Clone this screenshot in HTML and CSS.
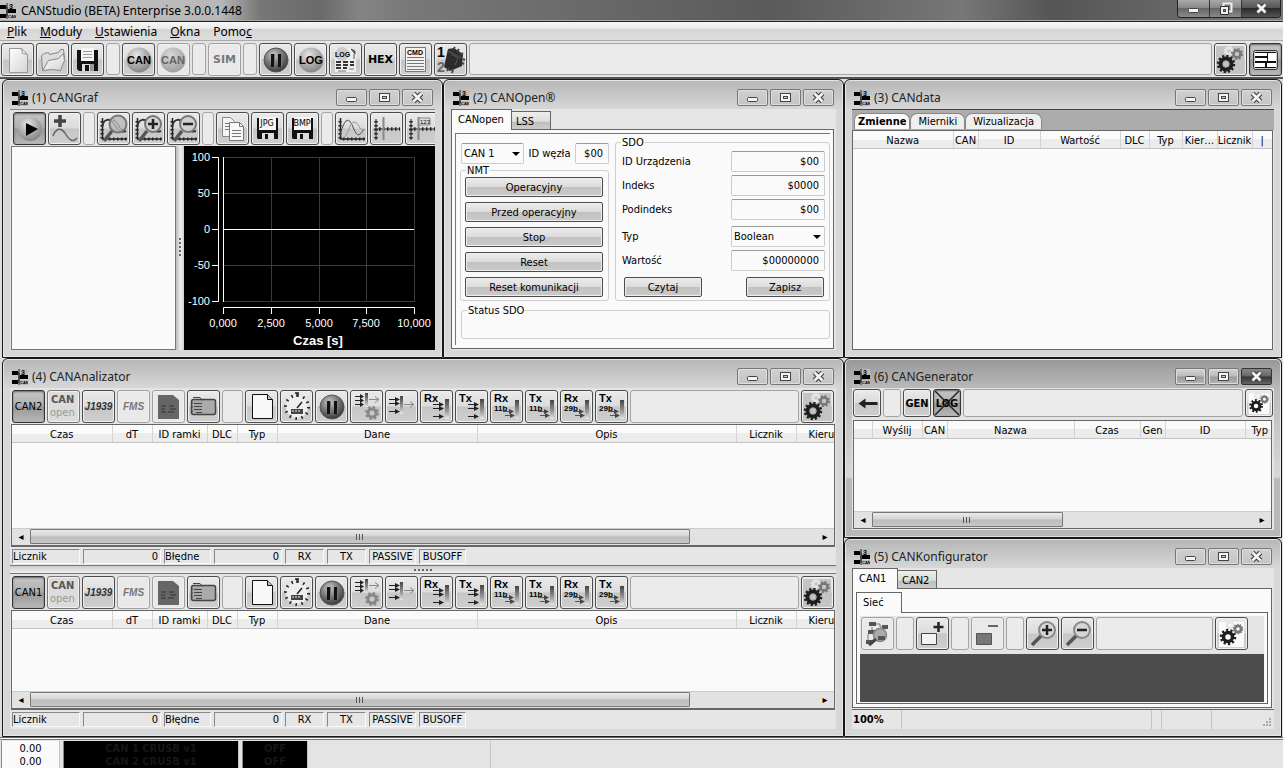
FILE: index.html
```html
<!DOCTYPE html>
<html lang="pl">
<head>
<meta charset="utf-8">
<title>CANStudio (BETA) Enterprise 3.0.0.1448</title>
<link rel="stylesheet" href="styles.css">
</head>
<body>
<svg class="defs" aria-hidden="true">
  <defs>
    <radialGradient id="ball" cx=".4" cy=".3" r=".75"><stop offset="0" stop-color="#e6e6e6"/><stop offset=".5" stop-color="#b0b0b0"/><stop offset="1" stop-color="#808080"/></radialGradient>
    <radialGradient id="ballPale" cx=".4" cy=".3" r=".75"><stop offset="0" stop-color="#d8d8d8"/><stop offset="1" stop-color="#9c9c9c"/></radialGradient>
    <radialGradient id="ballDark" cx=".4" cy=".3" r=".75"><stop offset="0" stop-color="#c8c8c8"/><stop offset=".5" stop-color="#777"/><stop offset="1" stop-color="#333"/></radialGradient>
    <linearGradient id="paper" x1="0" y1="0" x2="1" y2="1"><stop offset="0" stop-color="#fff"/><stop offset="1" stop-color="#d4d4d4"/></linearGradient>
    <linearGradient id="bar" x1="0" y1="0" x2="0" y2="1"><stop offset="0" stop-color="#444"/><stop offset=".6" stop-color="#999"/><stop offset="1" stop-color="#e8e8e8"/></linearGradient>
  </defs>
  <symbol id="i-logo" viewBox="0 0 16 16">
    <path d="M7 0h9v6H7zM7 11h9v5H7z" fill="#bbb"/>
    <path d="M5 4h2v9H5M7 8h2" fill="none" stroke="#222"/>
    <path d="M0 2h6v4H0zM0 11h6v4H0zM8 6h8v4H8z" fill="#000"/>
    <path d="M7 0v16" stroke="#222"/>
  </symbol>
  <symbol id="i-min" viewBox="0 0 31 17"><rect x="10.500" y="8.500" width="10" height="4" rx="1" fill="#f4f4f4" stroke="#444"/></symbol>
  <symbol id="i-max" viewBox="0 0 31 17"><rect x="10.500" y="4.500" width="10" height="8" fill="#f4f4f4" stroke="#444"/><rect x="13.500" y="7.500" width="4" height="2" fill="#ccc" stroke="#444"/></symbol>
  <symbol id="i-restore" viewBox="0 0 27 17"><path d="M11.500 3.500h8v8h-8z" fill="#777" stroke="#eee" stroke-width="2"/><path d="M8.500 6.500h8v8h-8z" fill="#eee" stroke="#333"/><path d="M11.500 9.500h2v2h-2z" fill="#999" stroke="#333"/></symbol>
  <symbol id="i-close" viewBox="0 0 31 17"><path d="M11.500 4.500l8 8m0-8l-8 8" stroke="#444" stroke-width="5"/><path d="M11.500 4.500l8 8m0-8l-8 8" stroke="#f4f4f4" stroke-width="2.600"/></symbol>
  <symbol id="i-new" viewBox="0 0 31 31"><path d="M7.500 4.500h12l6 6v18h-18z" fill="url(#paper)" stroke="#999"/><path d="M19.500 4.500l1 5 5 1z" fill="#eee" stroke="#999"/></symbol>
  <symbol id="i-folder" viewBox="0 0 31 31"><path d="M5.500 26.500l-1-15 3-2 4-1 1 2 9-2 2-3h3l1 9" fill="#ddd" stroke="#888"/><path d="M5.500 26.500l6-10 10-2 5-5 1 7-4 10-8-1z" fill="url(#paper)" stroke="#888"/></symbol>
  <symbol id="i-save" viewBox="0 0 31 31"><path d="M5 6h21v21H7l-2-2z" fill="#111"/><path d="M9 4h13v13H9z" fill="#f6f6f6"/><path d="M11 7.500h9M11 10.500h9M11 13.500h9" stroke="#999"/><path d="M10 20h12v7H10z" fill="#ddd"/><path d="M13 21h4v6h-4z" fill="#111"/><path d="M18 20h4v7h-4z" fill="#999"/></symbol>
  <symbol id="i-ball" viewBox="0 0 31 31"><circle cx="16" cy="16" r="12.500" fill="url(#ball)"/></symbol>
  <symbol id="i-balloff" viewBox="0 0 31 31"><circle cx="15" cy="16" r="12.500" fill="url(#ballPale)"/></symbol>
  <symbol id="i-pause" viewBox="0 0 31 31"><circle cx="16" cy="16" r="12" fill="url(#ballDark)" stroke="#555"/><path d="M11 10h4v13h-4zM18 10h4v13h-4z" fill="#111"/><path d="M14.500 10v13M21.500 10v13" stroke="#777"/></symbol>
  <symbol id="i-logfile" viewBox="0 0 31 31"><path d="M5 4h17l4 4v20H5z" fill="#eee"/><path d="M21 5l4 5V7zM24 10v5" fill="#555" stroke="#555"/><circle cx="12" cy="10" r="7" fill="#ccc"/><path d="M6 18h5M13 18h5M20 18h4M6 21h5M13 21h5M20 21h4M6 24h5M13 24h4" stroke="#333" stroke-width="2"/><path d="M8 27h8M19 25h5" stroke="#777"/></symbol>
  <symbol id="i-cmd" viewBox="0 0 31 31"><path d="M5.500 3.500h20v24h-20z" fill="#f2f2f2" stroke="#777"/><path d="M7 13.500h17M7 16.500h17M7 19.500h17M7 22.500h17M7 25.500h17" stroke="#777"/></symbol>
  <symbol id="i-chip" viewBox="0 0 31 31"><path d="M13 5l-4 18 6 4 12-5 1-12-9-6z" fill="#2b2b2b"/><path d="M13 7l13 7M20 3l-2 3M24 5l-2 3M28 9l-3 2M12 27l2-3M17 29l1-3M28 15l2 1M27 19l2 1" stroke="#444" stroke-width="2"/><path d="M16 10l7 4-3 7" fill="none" stroke="#555"/></symbol>
  <symbol id="i-gear" viewBox="0 0 31 31"><path d="M1 2h28v28H1z" fill="#c4c4c4"/><g fill="none"><circle cx="14" cy="7" r="3" stroke="#e6e6e6" stroke-width="2.500"/><circle cx="14" cy="7" r="4.500" stroke="#e6e6e6" stroke-width="1.500" stroke-dasharray="1.600 1.200"/><circle cx="22" cy="10" r="3.500" stroke="#777" stroke-width="2.500"/><circle cx="22" cy="10" r="5" stroke="#777" stroke-width="2" stroke-dasharray="2 1.900"/><circle cx="11" cy="20" r="5.500" stroke="#1e1e1e" stroke-width="4"/><circle cx="11" cy="20" r="8" stroke="#1e1e1e" stroke-width="2.500" stroke-dasharray="2.200 2"/><circle cx="11" cy="20" r="3" stroke="#aaa"/></g></symbol>
  <symbol id="i-gearpale" viewBox="0 0 31 31"><path d="M3 4h25v25H3z" fill="#fafafa"/><g fill="none"><circle cx="14" cy="7" r="3" stroke="#e6e6e6" stroke-width="3"/><circle cx="22" cy="11" r="3" stroke="#777" stroke-width="2.500"/><circle cx="22" cy="11" r="4.500" stroke="#777" stroke-width="1.500" stroke-dasharray="1.600 1.200"/><circle cx="12" cy="19" r="4.500" stroke="#1e1e1e" stroke-width="3.500"/><circle cx="12" cy="19" r="7" stroke="#1e1e1e" stroke-width="2.500" stroke-dasharray="2.200 2.200"/></g></symbol>
  <symbol id="i-layout" viewBox="0 0 31 31"><rect x="3.500" y="6.500" width="24" height="19" rx="2" fill="#ccc" stroke="#333"/><path d="M5 8h21v16H5z" fill="#111"/><path d="M5 9h12v3H5zM5 14h12v3H5zM5 19h10v4H5zM18 9h8v8h-8zM17 19h9v4h-9z" fill="#fff"/></symbol>
  <symbol id="i-play" viewBox="0 0 31 31"><circle cx="16" cy="16" r="12" fill="url(#ball)"/><path d="M12 10l12 6-12 7z" fill="#000"/></symbol>
  <symbol id="i-addcurve" viewBox="0 0 31 31"><path d="M11 2v12M5 8h12" stroke="#444" stroke-width="3.500"/><path d="M4 23c3-8 8-9 12-3 4 7 8 10 12 5" fill="none" stroke="#666" stroke-width="1.500"/></symbol>
  <symbol id="i-axes" viewBox="0 0 31 31"><path d="M4.500 5v21H29" fill="none" stroke="#222" stroke-width="1.500"/><path d="M4 8v18M7 26h22" fill="none" stroke="#222" stroke-width="3" stroke-dasharray="1.500 2.500"/></symbol>
  <symbol id="i-lens" viewBox="0 0 31 31"><use href="#i-axes"/><path d="M4 14c2-9 8-9 12-3s6 9 12 7" fill="none" stroke="#333" stroke-width="2"/><path d="M6 28l8-10" stroke="#555" stroke-width="3.500"/></symbol>
  <symbol id="i-zoomfit" viewBox="0 0 31 31"><use href="#i-lens"/><circle cx="20" cy="11" r="8.500" fill="#bbb" fill-opacity=".85" stroke="#777" stroke-width="2"/><path d="M15 7c5 1 5 7 9 10" fill="none" stroke="#888"/></symbol>
  <symbol id="i-zoomin" viewBox="0 0 31 31"><use href="#i-lens"/><circle cx="20" cy="11" r="8" fill="#d0d0d0" stroke="#777" stroke-width="2"/><path d="M20 6v10M15 11h10" stroke="#222" stroke-width="2.500"/></symbol>
  <symbol id="i-zoomout" viewBox="0 0 31 31"><use href="#i-lens"/><circle cx="20" cy="11" r="8" fill="#d0d0d0" stroke="#777" stroke-width="2"/><path d="M15 11h10" stroke="#222" stroke-width="2.500"/></symbol>
  <symbol id="i-copy" viewBox="0 0 31 31"><path d="M5.500 4.500h8l4 4v15h-12z" fill="#f4f4f4" stroke="#888"/><path d="M12.500 9.500h10l4 4v14h-14z" fill="#f8f8f8" stroke="#777"/><path d="M22.500 9.500v4h4M15 17.500h9M15 20.500h9M15 23.500h9M8 10.500h4M8 13.500h4M8 16.500h4" fill="none" stroke="#777"/></symbol>
  <symbol id="i-disk" viewBox="0 0 31 31"><path d="M5 5h21v21H6l-1-1z" fill="#111"/><path d="M7 4h17v13H7z" fill="#f6f6f6"/><path d="M10 20h12v6H10z" fill="#ddd"/><path d="M13 21h3v5h-3z" fill="#111"/></symbol>
  <symbol id="i-waves" viewBox="0 0 31 31"><use href="#i-axes"/><path d="M4 22c5-18 9-18 13-8s6 10 11 2" fill="none" stroke="#444"/><path d="M6 25c7-1 7-16 12-16s5 9 10 8" fill="none" stroke="#999"/></symbol>
  <symbol id="i-cursor" viewBox="0 0 31 31"><path d="M5 6v21M3 16h26" stroke="#222"/><path d="M5 8v19M8 16h21" stroke="#222" stroke-width="3.500" stroke-dasharray="1.500 2.500"/><path d="M12.500 4v23" stroke="#888" stroke-width="2"/></symbol>
  <symbol id="i-cursorval" viewBox="0 0 31 31"><use href="#i-cursor"/><path d="M13 5h11v7H13z" fill="#ddd" stroke="#888"/></symbol>
  <symbol id="i-filedark" viewBox="0 0 31 31"><path d="M5 4h15l6 5v19H5z" fill="#666"/><path d="M8 15h5M16 15h5M8 18h4M17 18h6M8 21h5M15 21h6" stroke="#444" stroke-width="1.500"/></symbol>
  <symbol id="i-table" viewBox="0 0 31 31"><rect x="3.500" y="8.500" width="24" height="15" rx="2" fill="#aaa" stroke="#444" stroke-width="1.500"/><path d="M5 6.500h7l2 3M6 12.500h8M6 15.500h8M6 18.500h8M8 21.500h6M4 12h1M4 16h1M4 20h1" fill="none" stroke="#444"/></symbol>
  <symbol id="i-page" viewBox="0 0 31 31"><path d="M6.500 3.500h15l5 5v19h-20z" fill="#f8f8f8" stroke="#111"/><path d="M21.500 3.500v5h5" fill="#bbb" stroke="#111"/></symbol>
  <symbol id="i-clock" viewBox="0 0 31 31"><circle cx="16" cy="16" r="11" fill="#eee"/><circle cx="16" cy="16" r="11.500" fill="none" stroke="#222" stroke-width="3" stroke-dasharray="1.500 4.520"/><path d="M14 2h4M16 2v4M16 17l5-6" stroke="#222" stroke-width="1.500"/><path d="M10 18h12v5H10z" fill="#444"/><path d="M11 20h2m1 0h2m1 0h2" stroke="#eee"/></symbol>
  <symbol id="i-arrows" viewBox="0 0 31 31"><path d="M4 7.500h6M4 11.500h6M4 15.500h6" stroke="#222"/><path d="M9 5l4 2.500-4 2.500zM9 9l4 2.500-4 2.500zM9 13l4 2.500-4 2.500z" fill="#222"/></symbol>
  <symbol id="i-filter" viewBox="0 0 31 31"><use href="#i-arrows" y="-2"/><path d="M14 2h3v14h-3z" fill="url(#bar)"/><path d="M18 8.500h9m-3-3l4 3-4 3" fill="none" stroke="#888"/><circle cx="21" cy="22" r="4" fill="none" stroke="#888" stroke-width="3"/><circle cx="21" cy="22" r="6" fill="none" stroke="#888" stroke-width="2" stroke-dasharray="2.500 2.200"/></symbol>
  <symbol id="i-filter2" viewBox="0 0 31 31"><path d="M3 8.500h7M3 12.500h7M3 20.500h7" stroke="#222"/><path d="M9 6l5 2.500-5 2.500zM9 10l5 2.500-5 2.500zM9 18l5 2.500-5 2.500z" fill="#222"/><path d="M14 5h3v18h-3z" fill="url(#bar)"/><path d="M18 13.500h9m-3-3l4 3-4 3" fill="none" stroke="#888"/></symbol>
  <symbol id="i-flow" viewBox="0 0 31 31"><path d="M12 13.500h8M12 17.500h8M12 25.500h8" stroke="#222"/><path d="M18 11l5 2.500-5 2.500zM18 15l5 2.500-5 2.500zM18 23l5 2.500-5 2.500z" fill="#222"/><path d="M24 8h4v20h-4z" fill="url(#bar)"/></symbol>
  <symbol id="i-flow2" viewBox="0 0 31 31"><path d="M12 20.500h7M14 24.500h7" stroke="#555"/><path d="M18 18l5 2.500-5 2.500zM19 22l5 2.500-5 2.500z" fill="#444"/><path d="M24 9h4v19h-4z" fill="url(#bar)"/></symbol>
  <symbol id="i-back" viewBox="0 0 25 26"><path d="M4 13.500l7-5v3.500h12v3H11v3.500z" fill="#222"/></symbol>
  <symbol id="i-cross" viewBox="0 0 26 26"><path d="M1 1l24 24M25 1L1 25" stroke="#222" stroke-width="1.500"/></symbol>
  <symbol id="i-net" viewBox="0 0 31 31"><path d="M7 4h7v4H7zM20 7h6v4h-6zM6 12h7v4H6zM4 22h7v4H4z" fill="#555"/><path d="M14 6h4v3h2M10 12v-3M6 16v6" fill="none" stroke="#777"/><circle cx="18" cy="17" r="6.500" fill="#aaa" stroke="#888" stroke-width="1.500"/><path d="M16 18h7v4h-7z" fill="#555"/><path d="M7 27l7-6" stroke="#444" stroke-width="3"/></symbol>
  <symbol id="i-nodeadd" viewBox="0 0 31 31"><path d="M4.500 15.500h15v11h-15z" fill="#f2f2f2" stroke="#444"/><path d="M21.500 4v10M16.500 9h10" stroke="#222" stroke-width="2.500"/></symbol>
  <symbol id="i-nodedel" viewBox="0 0 31 31"><path d="M4.500 15.500h15v11h-15z" fill="#777" stroke="#555"/><path d="M16 8h10" stroke="#666" stroke-width="2"/></symbol>
  <symbol id="i-magin" viewBox="0 0 31 31"><path d="M5 27L15 17" stroke="#555" stroke-width="3.500"/><circle cx="20" cy="12" r="8" fill="#d6d6d6" stroke="#888" stroke-width="2"/><path d="M20 7v10M15 12h10" stroke="#222" stroke-width="2.500"/></symbol>
  <symbol id="i-magout" viewBox="0 0 31 31"><path d="M5 27L15 17" stroke="#555" stroke-width="3.500"/><circle cx="20" cy="12" r="8" fill="#d6d6d6" stroke="#888" stroke-width="2"/><path d="M15 12h10" stroke="#222" stroke-width="2.500"/></symbol>
</svg>

<div class="app">
  <header class="apptitle">
    <svg class="logo"><use href="#i-logo"/><text x="9" y="6" class="t-logo3">3</text><text x="8" y="15" class="t-logoc">CAN</text></svg>
    <h1>CANStudio (BETA) Enterprise 3.0.0.1448</h1>
    <div class="appctl">
      <button aria-label="Minimalizuj"><svg><use href="#i-min"/></svg></button>
      <button aria-label="Przywróć"><svg><use href="#i-restore"/></svg></button>
      <button class="x" aria-label="Zamknij"><svg><use href="#i-close"/></svg></button>
    </div>
  </header>
  <nav class="menu">
    <a href="#"><u>P</u>lik</a><a href="#"><u>M</u>oduły</a><a href="#"><u>U</u>stawienia</a><a href="#"><u>O</u>kna</a><a href="#">Pomo<u>c</u></a>
  </nav>
  <div class="toolbar main">
    <button class="tb" aria-label="Nowy"><svg><use href="#i-new"/></svg></button>
    <button class="tb" aria-label="Otwórz"><svg><use href="#i-folder"/></svg></button>
    <button class="tb" aria-label="Zapisz projekt"><svg><use href="#i-save"/></svg></button>
    <span class="sep"></span>
    <button class="tb" aria-label="CAN start"><svg><use href="#i-ball"/><text x="16" y="20" class="t-ball">CAN</text></svg></button>
    <button class="tb off" aria-label="CAN stop"><svg><use href="#i-balloff"/><text x="15" y="20" class="t-ball pale">CAN</text></svg></button>
    <span class="sep"></span>
    <button class="tb off sim">SIM</button>
    <span class="sep"></span>
    <button class="tb" aria-label="Pauza"><svg><use href="#i-pause"/></svg></button>
    <button class="tb" aria-label="Log"><svg><use href="#i-ball"/><text x="16" y="20" class="t-ball">LOG</text></svg></button>
    <button class="tb" aria-label="Plik logu"><svg><use href="#i-logfile"/><text x="5" y="13" class="t-7">LOG</text></svg></button>
    <button class="tb hex">HEX</button>
    <button class="tb" aria-label="Polecenia"><svg><use href="#i-cmd"/><text x="15" y="11" class="t-7 mid">CMD</text></svg></button>
    <button class="tb" aria-label="Urządzenia"><svg><use href="#i-chip"/><text x="2" y="13" class="t-14">1</text><text x="2" y="28" class="t-14 grey">2</text></svg></button>
    <span class="sep fill"></span>
    <button class="tb" aria-label="Opcje"><svg><use href="#i-gear"/></svg></button>
    <button class="tb down" aria-label="Układ okien"><svg><use href="#i-layout"/></svg></button>
  </div>

  <main class="desktop">
    <div class="col left">
      <div class="pair">
        <section class="win">
          <header class="wt"><svg class="logo"><use href="#i-logo"/><text x="9" y="6" class="t-logo3">3</text><text x="8" y="15" class="t-logoc">CAN</text></svg><h2>(1) CANGraf</h2>
            <button aria-label="Minimalizuj"><svg><use href="#i-min"/></svg></button><button aria-label="Maksymalizuj"><svg><use href="#i-max"/></svg></button><button aria-label="Zamknij"><svg><use href="#i-close"/></svg></button></header>
          <div class="wc">
            <div class="toolbar graf">
              <button class="tb down" aria-label="Start"><svg><use href="#i-play"/></svg></button>
              <button class="tb" aria-label="Dodaj przebieg"><svg><use href="#i-addcurve"/></svg></button>
              <span class="sep thin"></span>
              <button class="tb" aria-label="Dopasuj"><svg><use href="#i-zoomfit"/></svg></button>
              <button class="tb" aria-label="Powiększ"><svg><use href="#i-zoomin"/></svg></button>
              <button class="tb" aria-label="Pomniejsz"><svg><use href="#i-zoomout"/></svg></button>
              <span class="sep thin"></span>
              <button class="tb" aria-label="Kopiuj"><svg><use href="#i-copy"/></svg></button>
              <button class="tb" aria-label="Zapisz JPG"><svg><use href="#i-disk"/><text x="15" y="13" class="t-8 mid">JPG</text></svg></button>
              <button class="tb" aria-label="Zapisz BMP"><svg><use href="#i-disk"/><text x="15" y="13" class="t-8 mid">BMP</text></svg></button>
              <span class="sep thin"></span>
              <button class="tb" aria-label="Przebiegi"><svg><use href="#i-waves"/></svg></button>
              <button class="tb" aria-label="Kursor"><svg><use href="#i-cursor"/></svg></button>
              <button class="tb" aria-label="Wartości kursora"><svg><use href="#i-cursorval"/><text x="14" y="11" class="t-6">123</text></svg></button>
            </div>
            <div class="grafbody">
              <div class="serieslist"></div>
              <div class="vsplit"><i></i></div>
              <div class="plot">
                <svg viewBox="0 0 251 204" role="img" aria-label="Wykres">
                  <path d="M39 11.500h191M39 47.500h191M39 119.500h191M39 155.500h191M87.500 11v145M135.500 11v145M182.500 11v145M230.500 11v145" stroke="#3a3a3a"/>
                  <path d="M39.500 11v145M28 11.500h6.500v144H28M28 47.500h6M28 83.500h6M28 119.500h6M39 83.500h191M39.500 168v-6.500h191v6.500M87.500 162v6M135.500 162v6M182.500 162v6" fill="none" stroke="#fff"/>
                  <g class="ax end"><text x="26" y="15">100</text><text x="26" y="51">50</text><text x="26" y="87">0</text><text x="26" y="123">-50</text><text x="26" y="159">-100</text></g>
                  <g class="ax mid"><text x="39" y="181">0,000</text><text x="87" y="181">2,500</text><text x="135" y="181">5,000</text><text x="182" y="181">7,500</text><text x="230" y="181">10,000</text></g>
                  <text x="134" y="199" class="axt">Czas [s]</text>
                </svg>
              </div>
            </div>
          </div>
        </section>

        <section class="win">
          <header class="wt"><svg class="logo"><use href="#i-logo"/><text x="9" y="6" class="t-logo3">3</text><text x="8" y="15" class="t-logoc">CAN</text></svg><h2>(2) CANOpen®</h2>
            <button aria-label="Minimalizuj"><svg><use href="#i-min"/></svg></button><button aria-label="Maksymalizuj"><svg><use href="#i-max"/></svg></button><button aria-label="Zamknij"><svg><use href="#i-close"/></svg></button></header>
          <div class="wc">
            <div class="tabs"><button class="tab on t60">CANopen</button><button class="tab">LSS</button></div>
            <div class="panel">
              <div class="openform">
                <div class="nodecol">
                  <div class="noderow">
                    <span class="sel"><select aria-label="Kanał"><option>CAN 1</option></select></span>
                    <label for="node">ID węzła</label><input id="node" class="fld" value="$00">
                  </div>
                  <fieldset class="nmt"><legend>NMT</legend>
                    <button class="btn">Operacyjny</button><button class="btn">Przed operacyjny</button><button class="btn">Stop</button><button class="btn">Reset</button><button class="btn">Reset komunikacji</button>
                  </fieldset>
                </div>
                <fieldset class="sdo"><legend>SDO</legend>
                  <div class="rows">
                    <label for="dev">ID Urządzenia</label><input id="dev" class="fld" value="$00">
                    <label for="idx">Indeks</label><input id="idx" class="fld" value="$0000">
                    <label for="sub">Podindeks</label><input id="sub" class="fld" value="$00">
                  </div>
                  <div class="rows">
                    <label for="typ">Typ</label><span class="sel"><select id="typ"><option>Boolean</option></select></span>
                    <label for="val">Wartość</label><input id="val" class="fld" value="$00000000">
                  </div>
                  <div class="rw"><button class="btn">Czytaj</button><button class="btn">Zapisz</button></div>
                </fieldset>
                <fieldset class="status"><legend>Status SDO</legend></fieldset>
              </div>
            </div>
          </div>
        </section>
      </div>

      <section class="win">
        <header class="wt"><svg class="logo"><use href="#i-logo"/><text x="9" y="6" class="t-logo3">3</text><text x="8" y="15" class="t-logoc">CAN</text></svg><h2>(4) CANAnalizator</h2>
          <button aria-label="Minimalizuj"><svg><use href="#i-min"/></svg></button><button aria-label="Maksymalizuj"><svg><use href="#i-max"/></svg></button><button aria-label="Zamknij"><svg><use href="#i-close"/></svg></button></header>
        <div class="wc">
          <div class="an an1">
            <div class="toolbar ana">
              <button class="tb down">CAN2</button>
              <button class="tb soft" aria-label="CANopen"><svg><text x="3" y="12" class="t-open">CAN</text><text x="2" y="25" class="t-open2">open</text></svg></button>
              <button class="tb ital">J1939</button>
              <button class="tb off ital">FMS</button>
              <button class="tb off" aria-label="Plik"><svg><use href="#i-filedark"/></svg></button>
              <button class="tb" aria-label="Tabela"><svg><use href="#i-table"/></svg></button>
              <span class="sep wide"></span>
              <button class="tb" aria-label="Wyczyść"><svg><use href="#i-page"/></svg></button>
              <button class="tb" aria-label="Czas"><svg><use href="#i-clock"/></svg></button>
              <button class="tb" aria-label="Pauza"><svg><use href="#i-pause"/></svg></button>
              <button class="tb" aria-label="Ustawienia filtru"><svg><use href="#i-filter"/></svg></button>
              <button class="tb" aria-label="Filtr"><svg><use href="#i-filter2"/></svg></button>
              <button class="tb" aria-label="Rx"><svg><use href="#i-flow"/><text x="3" y="11" class="t-rx">Rx</text></svg></button>
              <button class="tb" aria-label="Tx"><svg><use href="#i-flow"/><text x="3" y="11" class="t-rx">Tx</text></svg></button>
              <button class="tb" aria-label="Rx 11b"><svg><use href="#i-flow2"/><text x="3" y="11" class="t-rx">Rx</text><text x="3" y="20" class="t-bit">11b</text></svg></button>
              <button class="tb" aria-label="Tx 11b"><svg><use href="#i-flow2"/><text x="3" y="11" class="t-rx">Tx</text><text x="3" y="20" class="t-bit">11b</text></svg></button>
              <button class="tb" aria-label="Rx 29b"><svg><use href="#i-flow2"/><text x="3" y="11" class="t-rx">Rx</text><text x="3" y="20" class="t-bit">29b</text></svg></button>
              <button class="tb" aria-label="Tx 29b"><svg><use href="#i-flow2"/><text x="3" y="11" class="t-rx">Tx</text><text x="3" y="20" class="t-bit">29b</text></svg></button>
              <span class="sep fill"></span>
              <button class="tb" aria-label="Opcje"><svg><use href="#i-gear"/></svg></button>
            </div>
            <div class="grid">
              <table><colgroup><col class="w100"><col class="w40"><col class="w55"><col class="w30"><col class="w40"><col class="w200"><col><col class="w60"><col class="w38"></colgroup>
                <thead><tr><th>Czas</th><th>dT</th><th>ID ramki</th><th>DLC</th><th>Typ</th><th>Dane</th><th>Opis</th><th>Licznik</th><th class="cut">Kieru</th></tr></thead></table>
              <div class="rest"></div>
              <div class="hscroll"><button aria-label="W lewo">◂</button><div class="track"><div class="thumb"></div></div><button aria-label="W prawo">▸</button></div>
            </div>
            <div class="cells"><span class="c68 l">Licznik</span><span class="c78 r">0</span><span class="c48 l">Błędne</span><span class="c68 r">0</span><span class="c40">RX</span><span class="c40">TX</span><span class="c48">PASSIVE</span><span class="c48">BUSOFF</span></div>
          </div>
          <div class="hsplit"><i></i></div>
          <div class="an an2">
            <div class="toolbar ana">
              <button class="tb down">CAN1</button>
              <button class="tb soft" aria-label="CANopen"><svg><text x="3" y="12" class="t-open">CAN</text><text x="2" y="25" class="t-open2">open</text></svg></button>
              <button class="tb ital">J1939</button>
              <button class="tb off ital">FMS</button>
              <button class="tb off" aria-label="Plik"><svg><use href="#i-filedark"/></svg></button>
              <button class="tb" aria-label="Tabela"><svg><use href="#i-table"/></svg></button>
              <span class="sep wide"></span>
              <button class="tb" aria-label="Wyczyść"><svg><use href="#i-page"/></svg></button>
              <button class="tb" aria-label="Czas"><svg><use href="#i-clock"/></svg></button>
              <button class="tb" aria-label="Pauza"><svg><use href="#i-pause"/></svg></button>
              <button class="tb" aria-label="Ustawienia filtru"><svg><use href="#i-filter"/></svg></button>
              <button class="tb" aria-label="Filtr"><svg><use href="#i-filter2"/></svg></button>
              <button class="tb" aria-label="Rx"><svg><use href="#i-flow"/><text x="3" y="11" class="t-rx">Rx</text></svg></button>
              <button class="tb" aria-label="Tx"><svg><use href="#i-flow"/><text x="3" y="11" class="t-rx">Tx</text></svg></button>
              <button class="tb" aria-label="Rx 11b"><svg><use href="#i-flow2"/><text x="3" y="11" class="t-rx">Rx</text><text x="3" y="20" class="t-bit">11b</text></svg></button>
              <button class="tb" aria-label="Tx 11b"><svg><use href="#i-flow2"/><text x="3" y="11" class="t-rx">Tx</text><text x="3" y="20" class="t-bit">11b</text></svg></button>
              <button class="tb" aria-label="Rx 29b"><svg><use href="#i-flow2"/><text x="3" y="11" class="t-rx">Rx</text><text x="3" y="20" class="t-bit">29b</text></svg></button>
              <button class="tb" aria-label="Tx 29b"><svg><use href="#i-flow2"/><text x="3" y="11" class="t-rx">Tx</text><text x="3" y="20" class="t-bit">29b</text></svg></button>
              <span class="sep fill"></span>
              <button class="tb" aria-label="Opcje"><svg><use href="#i-gear"/></svg></button>
            </div>
            <div class="grid">
              <table><colgroup><col class="w100"><col class="w40"><col class="w55"><col class="w30"><col class="w40"><col class="w200"><col><col class="w60"><col class="w38"></colgroup>
                <thead><tr><th>Czas</th><th>dT</th><th>ID ramki</th><th>DLC</th><th>Typ</th><th>Dane</th><th>Opis</th><th>Licznik</th><th class="cut">Kieru</th></tr></thead></table>
              <div class="rest"></div>
              <div class="hscroll"><button aria-label="W lewo">◂</button><div class="track"><div class="thumb"></div></div><button aria-label="W prawo">▸</button></div>
            </div>
            <div class="cells"><span class="c68 l">Licznik</span><span class="c78 r">0</span><span class="c48 l">Błędne</span><span class="c68 r">0</span><span class="c40">RX</span><span class="c40">TX</span><span class="c48">PASSIVE</span><span class="c48">BUSOFF</span></div>
          </div>
        </div>
      </section>
    </div>

    <div class="col right">
      <section class="win">
        <header class="wt"><svg class="logo"><use href="#i-logo"/><text x="9" y="6" class="t-logo3">3</text><text x="8" y="15" class="t-logoc">CAN</text></svg><h2>(3) CANdata</h2>
          <button aria-label="Minimalizuj"><svg><use href="#i-min"/></svg></button><button aria-label="Maksymalizuj"><svg><use href="#i-max"/></svg></button><button aria-label="Zamknij"><svg><use href="#i-close"/></svg></button></header>
        <div class="wc">
          <div class="rtabs"><button class="on">Zmienne</button><button>Mierniki</button><button>Wizualizacja</button></div>
          <div class="grid data">
            <table><colgroup><col><col class="w25"><col class="w62"><col class="w80"><col class="w29"><col class="w33"><col class="w35"><col class="w35"><col class="w20"></colgroup>
              <thead><tr><th>Nazwa</th><th>CAN</th><th>ID</th><th>Wartość</th><th>DLC</th><th>Typ</th><th>Kier…</th><th>Licznik</th><th>|</th></tr></thead></table>
            <div class="rest"></div>
          </div>
        </div>
      </section>

      <section class="win active">
        <header class="wt"><svg class="logo"><use href="#i-logo"/><text x="9" y="6" class="t-logo3">3</text><text x="8" y="15" class="t-logoc">CAN</text></svg><h2>(6) CANGenerator</h2>
          <button aria-label="Minimalizuj"><svg><use href="#i-min"/></svg></button><button aria-label="Maksymalizuj"><svg><use href="#i-max"/></svg></button><button class="x" aria-label="Zamknij"><svg><use href="#i-close"/></svg></button></header>
        <div class="wc">
          <div class="toolbar gen">
            <button class="tb" aria-label="Wstecz"><svg><use href="#i-back"/></svg></button>
            <span class="sep"></span>
            <button class="tb">GEN</button>
            <button class="tb down nolog">LOG<svg><use href="#i-cross"/></svg></button>
            <span class="sep fill"></span>
            <button class="tb" aria-label="Opcje"><svg><use href="#i-gearpale"/></svg></button>
          </div>
          <div class="grid gengrid">
            <table><colgroup><col class="w18"><col class="w50"><col class="w25"><col><col class="w66"><col class="w25"><col class="w80"><col class="w26"></colgroup>
              <thead><tr><th></th><th>Wyślij</th><th>CAN</th><th>Nazwa</th><th>Czas</th><th>Gen</th><th>ID</th><th class="typ">Typ</th></tr></thead></table>
            <div class="rest"></div>
            <div class="hscroll"><button aria-label="W lewo">◂</button><div class="track"><div class="thumb"></div></div><button aria-label="W prawo">▸</button></div>
          </div>
        </div>
      </section>

      <section class="win">
        <header class="wt"><svg class="logo"><use href="#i-logo"/><text x="9" y="6" class="t-logo3">3</text><text x="8" y="15" class="t-logoc">CAN</text></svg><h2>(5) CANKonfigurator</h2>
          <button aria-label="Minimalizuj"><svg><use href="#i-min"/></svg></button><button aria-label="Maksymalizuj"><svg><use href="#i-max"/></svg></button><button aria-label="Zamknij"><svg><use href="#i-close"/></svg></button></header>
        <div class="wc">
          <div class="tabs"><button class="tab on t45">CAN1</button><button class="tab">CAN2</button></div>
          <div class="panel konf">
            <div class="tabs inner"><button class="tab on t45">Sieć</button></div>
            <div class="panel net">
              <div class="toolbar nett">
                <button class="tb off" aria-label="Szukaj"><svg><use href="#i-net"/></svg></button>
                <span class="sep middle"></span>
                <button class="tb" aria-label="Dodaj węzeł"><svg><use href="#i-nodeadd"/></svg></button>
                <span class="sep middle"></span>
                <button class="tb off" aria-label="Usuń węzeł"><svg><use href="#i-nodedel"/></svg></button>
                <span class="sep middle"></span>
                <button class="tb" aria-label="Powiększ"><svg><use href="#i-magin"/></svg></button>
                <button class="tb" aria-label="Pomniejsz"><svg><use href="#i-magout"/></svg></button>
                <span class="sep fill"></span>
                <button class="tb" aria-label="Opcje"><svg><use href="#i-gearpale"/></svg></button>
              </div>
              <div class="canvas"></div>
            </div>
          </div>
          <div class="kstat"><span class="k1">100%</span><span class="k2"></span><span class="k3"></span><span class="k4"></span><span class="k5"><svg viewBox="0 0 9 9"><path d="M6 1h2M3 4h2M6 4h2M0 7h2M3 7h2M6 7h2" stroke="#aaa" stroke-width="2"/></svg></span></div>
        </div>
      </section>
    </div>
  </main>

  <footer class="statusbar">
    <span class="load">0.00<br>0.00</span>
    <span class="dev">CAN 1 CRUSB v1<br>CAN 2 CRUSB v1</span>
    <span class="state">OFF<br>OFF</span>
    <span class="msg"></span>
  </footer>
</div>
</body>
</html>
```

FILE: styles.css
```css
* { box-sizing: border-box; }
body { margin: 0; background: #e4e4e4; color: #000; font: 11px/13px "DejaVu Sans Condensed", "DejaVu Sans", sans-serif; }
button, input, select { font: inherit; color: inherit; margin: 0; padding: 0; border-radius: 0; }
h1, h2 { margin: 0; font: 12px/16px "Noto Sans", sans-serif; }
.defs { position: absolute; width: 0; height: 0; }
.app { display: flex; flex-direction: column; min-height: 100vh; }
.logo { width: 16px; height: 16px; flex: none; }

/* main window frame */
.apptitle { display: flex; align-items: center; gap: 5px; height: 22px; border-bottom: 1px solid #222; box-shadow: inset 0 -1px #aaa;
  background: linear-gradient(90deg, #c2c2c2 0, #b8b8b8 220px, #777 260px, #6a6a6a 320px, #848484 360px, #787878 410px, #5a5a5a 60%, #777 75%, #555 82%, #777 100%); }
.apptitle h1 { flex: 1; }
.appctl { display: flex; align-self: flex-start; width: 104px; height: 18px; margin-right: 2px; border: 1px solid #222; border-top: 0; border-radius: 0 0 4px 4px; overflow: hidden; }
.appctl button { flex: 27; border: 0; border-right: 1px solid #333; background: linear-gradient(#aaa, #888 45%, #666 50%, #8a8a8a); display: flex; justify-content: center; }
.appctl button.x { flex: 46; border-right: 0; background: linear-gradient(#777, #555 45%, #2a2a2a 50%, #555); }
.appctl svg { width: 31px; height: 17px; }

.menu { display: flex; gap: 13px; align-items: center; height: 19px; padding: 1px 7px 0; background: linear-gradient(#f6f6f6, #ececec 35%, #d6d6d6 40%, #dedede); border-bottom: 1px solid #aaa; font: 12px/16px "Noto Sans", sans-serif; }
.menu a { color: #000; text-decoration: none; }

/* toolbars */
.toolbar { display: flex; gap: 2px; flex: none; background: #e4e4e4; }
.toolbar.main { padding: 2px 1px; height: 38px; border-bottom: 2px solid #555; }
.tb { width: 33px; height: 33px; flex: none; display: flex; align-items: center; justify-content: center; overflow: hidden; border: 1px solid #4c4c4c; border-radius: 3px; box-shadow: inset 0 0 0 1px #f0f0f0;
  background: linear-gradient(#eaeaea, #dcdcdc 48%, #c6c6c6 52%, #cfcfcf); }
.tb svg { width: 31px; height: 31px; flex: none; }
.tb.off { background: #e9e9e9; border-color: #a0a0a0; }
.tb.soft { background: #dcdcdc; border-color: #777; }
.tb.down { background: linear-gradient(#c6c6c6, #b0b0b0 48%, #989898 52%, #b8b8b8); box-shadow: inset 0 1px 2px #666; border-color: #333; }
.sim, .hex { font: bold 11px/13px "DejaVu Sans", sans-serif; }
.sim { color: #777; }
.ital { font: italic bold 10px/12px "Liberation Sans", sans-serif; color: #333; }
.ital.off { color: #777; }
.sep { flex: none; width: 14px; border: 1px solid #a4a4a4; border-radius: 3px; background: #ebebeb; }
.sep.thin { width: 12px; }
.sep.middle { width: 18px; }
.sep.wide { width: 21px; }
.sep.fill { flex: 1; }
.toolbar.graf { padding: 2px 0 1px 3px; height: 37px; overflow: hidden; border-top: 1px solid #888; }
.toolbar.ana { padding: 2px 2px 1px; height: 36px; }
.toolbar.gen { padding: 1px; height: 31px; }
.gen .tb { width: 28px; height: 28px; font: bold 11px/13px "DejaVu Sans Condensed", sans-serif; }
.gen .tb svg { width: 26px; height: 26px; }
.gen .sep { width: 18px; height: 28px; }
.gen .sep.fill { width: auto; }
.nolog { position: relative; }
.nolog svg { position: absolute; inset: 0; }
.toolbar.nett { padding: 1px 16px 4px 1px; height: 38px; }

/* icon lettering */
text { font-family: "Liberation Sans", sans-serif; }
.mid { text-anchor: middle; }
.t-logo3 { font-size: 7px; font-weight: bold; }
.t-logoc { font-size: 4px; font-weight: bold; }
.t-ball { font-size: 11px; font-weight: bold; text-anchor: middle; }
.pale, .grey { fill: #666; }
.t-6 { font-size: 6px; }
.t-7 { font-size: 7px; font-weight: bold; }
.t-8 { font: 8px "DejaVu Sans", sans-serif; }
.t-14 { font-size: 14px; font-weight: bold; }
.t-rx { font-size: 11px; font-weight: bold; }
.t-bit { font-size: 8px; font-weight: bold; }
.t-open { font: bold 11px "DejaVu Sans Condensed", sans-serif; fill: #555; }
.t-open2 { font: 11px "DejaVu Sans Condensed", sans-serif; fill: #999; }

/* desktop with the child windows */
.desktop { flex: 1; display: grid; grid-template-columns: 842fr 438fr; padding: 0 1px 0 2px; background: #ddd; }
.col { display: grid; min-width: 0; }
.left { grid-template-rows: 279fr 379fr; }
.right { grid-template-rows: 279fr 180fr 199fr; }
.pair { display: grid; grid-template-columns: 441fr 401fr; min-width: 0; }
.win { display: flex; flex-direction: column; min-width: 0; padding: 0 7px 7px; border: 1px solid #181818; border-radius: 6px 6px 0 0; background: #d7d7d7 linear-gradient(#b6b6b6, #d7d7d7) no-repeat 0 0 / 100% 29px; box-shadow: inset 0 0 0 1px #e6e6e6; }
.win.active { background: linear-gradient(#989898, #bababa 30px, #d8d8d8 118px, #b8b8b8 120px); }
.wt { display: flex; align-items: center; height: 29px; padding: 6px 2px 0; gap: 2px; }
.wt h2 { flex: 1; margin-left: 2px; color: #222; }
.wt button { width: 31px; height: 17px; border: 1px solid #777; border-radius: 2px; background: linear-gradient(#d0d0d0, #c4c4c4); box-shadow: inset 0 0 0 1px #dedede; display: flex; align-items: center; justify-content: center; }
.wt svg:not(.logo) { width: 31px; height: 17px; flex: none; }
.active .wt button { background: linear-gradient(#d4d4d4, #bbb 48%, #999 52%, #b6b6b6); }
.active .wt button.x { background: linear-gradient(#888, #666 48%, #333 52%, #666); border-color: #333; box-shadow: none; }
.wc { flex: 1; display: flex; flex-direction: column; min-width: 0; background: #e6e6e6; }

/* graph */
.grafbody { flex: 1; display: flex; }
.serieslist { flex: 165 1 165px; margin-left: 1px; background: #fafafa; border: 1px solid #777; }
.vsplit { flex: none; width: 8px; display: flex; align-items: center; justify-content: center; background: linear-gradient(90deg, #bbb, #f0f0f0 60%, #ccc); }
.vsplit i { width: 2px; height: 20px; background: repeating-linear-gradient(#666 0 2px, transparent 2px 4px); }
.plot { flex: 251 1 251px; background: #000; display: flex; }
.plot svg { width: 100%; height: 100%; }
.ax { font-size: 11px; }
.ax text { fill: #fff; }
.ax.end { text-anchor: end; }
.axt { font-size: 13px; font-weight: bold; fill: #fff; text-anchor: middle; }

/* tabs */
.tabs { display: flex; align-items: flex-end; height: 20px; flex: none; }
.tab { height: 18px; padding: 2px 4px 0; min-width: 39px; text-align: left; border: 1px solid #666; border-bottom: 0; border-left: 0; background: linear-gradient(#eee, #ddd 55%, #bebebe 60%, #ccc); }
.tab.on { height: 21px; margin-bottom: -1px; padding: 0 6px 1px; border-left: 1px solid #666; background: #fafafa; position: relative; }
.t60 { width: 61px; }
.t45 { width: 46px; }
.panel { flex: 1; display: flex; flex-direction: column; margin: 0 2px 1px 0; padding: 3px; border: 1px solid #666; background: #fafafa; }

/* CANopen form */
.openform { flex: 1; display: grid; grid-template-columns: 149px 1fr; grid-template-rows: auto auto; align-content: start; gap: 3px 6px; padding: 2px 0 0 4px; border: 1px solid #777; border-right: 0; border-bottom: 0; }
fieldset { margin: 0; padding: 0 4px; min-width: 0; border: 1px solid #cfcfcf; border-radius: 3px; }
legend { padding: 0 1px; margin-left: 1px; }
.nodecol { padding-top: 7px; }
.noderow { display: flex; align-items: center; justify-content: space-between; padding-left: 1px; }
.noderow .sel { width: 63px; }
.noderow .fld { width: 34px; }
.fld, .sel select { width: 100%; height: 21px; border: 1px solid #ccc; border-top-color: #999; border-radius: 2px; background: #fafafa; }
.fld { text-align: right; padding: 0 5px; }
.sel { position: relative; display: block; }
.sel select { appearance: none; padding: 0 2px; display: block; }
.sel::after { content: ""; position: absolute; right: 4px; top: 9px; border: 4px solid transparent; border-top-color: #000; border-bottom: 0; pointer-events: none; }
.nmt { padding: 0 5px 3px 4px; }
.nmt .btn { width: 100%; margin-bottom: 5px; display: block; }
.nmt .btn:last-child { margin-bottom: 0; }
.btn { height: 20px; border: 1px solid #4c4c4c; border-radius: 2px; box-shadow: inset 0 0 0 1px #eee; background: linear-gradient(#ececec, #dcdcdc 48%, #c2c2c2 52%, #cacaca); }
.sdo { padding: 2px 4px 0 6px; }
.sdo legend { margin-left: -1px; }
.rows { display: grid; grid-template-columns: 1fr 94px; row-gap: 3px; align-items: center; margin-bottom: 6px; }
.rw { display: flex; justify-content: space-between; padding: 0 1px 0 2px; }
.rw .btn { width: 78px; }
.status { grid-column: 1 / 3; height: 35px; margin-left: 1px; }

/* lists */
.grid { flex: 1; display: flex; flex-direction: column; min-width: 0; margin: 0 1px; background: #fafafa; border: 1px solid #666; border-bottom-width: 2px; }
table { width: 100%; table-layout: fixed; border-collapse: collapse; }
th { height: 17px; padding: 2px 0 0; font-weight: normal; overflow: hidden; white-space: nowrap; background: linear-gradient(#fafafa 50%, #ececec 50%); border-right: 1px solid #d4d4d4; border-bottom: 1px solid #c4c4c4; }
th:last-child { border-right: 0; }
th.cut { text-align: left; padding-left: 12px; }
th.typ { text-align: left; padding-left: 6px; }
.w18 { width: 18px; } .w20 { width: 20px; } .w25 { width: 25px; } .w26 { width: 26px; } .w29 { width: 29px; } .w30 { width: 30px; }
.w33 { width: 33px; } .w35 { width: 35px; } .w38 { width: 38px; } .w40 { width: 40px; } .w50 { width: 50px; } .w55 { width: 55px; }
.w60 { width: 60px; } .w62 { width: 62px; } .w66 { width: 66px; } .w80 { width: 80px; } .w100 { width: 100px; } .w200 { width: 200px; }
.rest { flex: 1; }
.hscroll { display: flex; height: 17px; background: #e2e2e2; border-top: 1px solid #ccc; }
.hscroll button { width: 18px; border: 0; background: none; font: 10px/14px "DejaVu Sans", sans-serif; }
.track { flex: 1; display: flex; padding: 0 0 1px; }
.thumb { width: 84%; border: 1px solid #777; border-radius: 1px; background: repeating-linear-gradient(90deg, #555 0 1px, transparent 1px 3px) no-repeat center / 8px 6px, linear-gradient(#eaeaea, #d4d4d4 48%, #bcbcbc 52%, #c8c8c8); }
.gengrid .thumb { width: 50%; }

/* analyser */
.an { display: flex; flex-direction: column; min-width: 0; }
.an1 { flex: 177 0 0; }
.an2 { flex: 155 0 0; }
.hsplit { height: 9px; display: flex; align-items: center; justify-content: center; border: 1px solid #777; border-width: 1px 0; background: linear-gradient(#ccc, #f0f0f0); }
.hsplit i { width: 19px; height: 2px; background: repeating-linear-gradient(90deg, #666 0 2px, transparent 2px 4px); }
.cells { display: flex; gap: 3px; height: 18px; padding: 2px 2px 1px; }
.an2 .cells { height: 19px; }
.cells span { height: 15px; text-align: center; border: 1px solid #fafafa; border-top-color: #888; border-left-color: #888; }
.cells .l { text-align: left; padding: 0; }
.cells .r { text-align: right; padding-right: 2px; }
.c68 { width: 68px; } .c78 { width: 78px; } .c48 { width: 47px; } .c40 { width: 39px; }

/* variables */
.rtabs { display: flex; height: 21px; padding: 3px 2px 1px; background: #acacac; border-top: 1px solid #444; }
.rtabs button { padding: 0 7px; border: 1px solid #888; border-bottom: 0; border-radius: 7px 7px 0 0; background: #efefef; }
.rtabs .on { padding: 0 3px; font-weight: bold; background: #fafafa; }
.data, .gengrid { margin: 0 1px 0 0; border-bottom-width: 1px; }
.gengrid { margin: 1px 2px 1px 1px; }

/* configurator */
.net { margin: 0; padding-bottom: 1px; }
.canvas { flex: 1; background: #4c4c4c; }
.kstat { display: flex; height: 20px; border-top: 1px solid #666; line-height: 19px; }
.kstat span { border-right: 1px solid #c4c4c4; }
.kstat .k1 { width: 50px; padding-left: 1px; font-weight: bold; }
.kstat .k2 { flex: 1; } .kstat .k3 { width: 10px; } .kstat .k4 { width: 50px; }
.kstat .k5 { width: 62px; border: 0; display: flex; align-items: flex-end; justify-content: flex-end; padding: 2px; }
.k5 svg { width: 9px; height: 9px; }

/* status bar */
.statusbar { display: flex; gap: 3px; height: 31px; padding: 3px 1px 0; background: #e4e4e4; border-top: 1px solid #666; box-shadow: inset 0 1px #fafafa, inset 0 2px #777; text-align: center; }
.statusbar span { padding-top: 1px; border-left: 1px solid #888; border-right: 1px solid #c4c4c4; }
.statusbar .load { width: 59px; background: #fafafa; }
.statusbar .dev { width: 176px; background: #000; color: #161616; font-weight: bold; }
.statusbar .state { width: 66px; background: #000; color: #161616; font-weight: bold; }
.statusbar .msg { width: 180px; border-left: 0; }
```
